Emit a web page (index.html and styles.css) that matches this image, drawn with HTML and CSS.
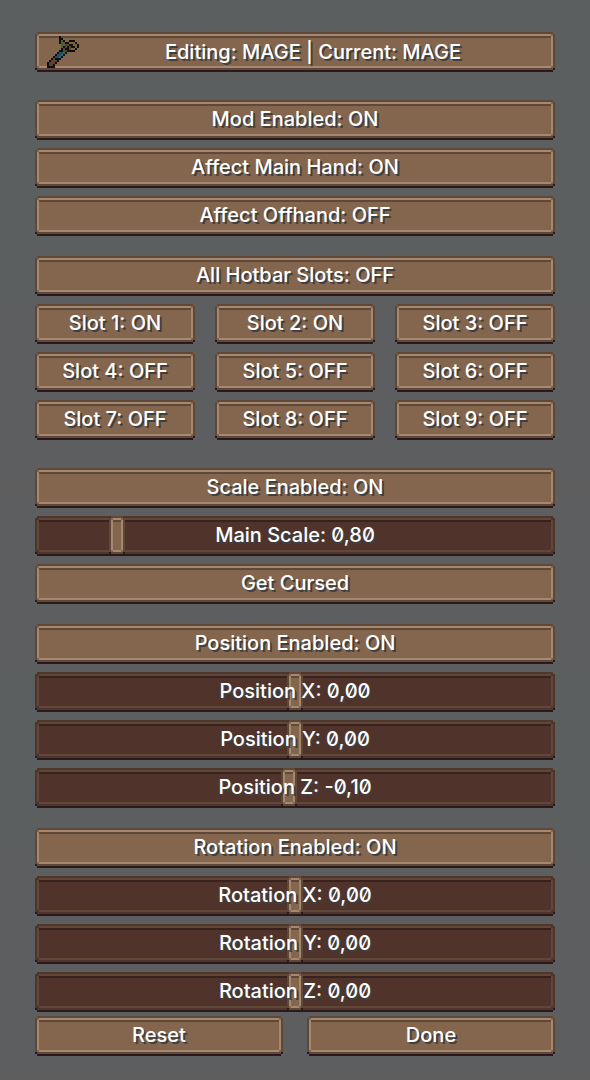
FILE: index.html
```
<!DOCTYPE html>
<html lang="en">
<head>
<meta charset="utf-8">
<meta name="viewport" content="width=device-width, initial-scale=1">
<title>Item settings</title>
<link rel="stylesheet" href="styles.css">
</head>
<body>
<main class="screen">
  <button class="btn btn-header" type="button">
    <svg class="staff" viewBox="0 0 16 16" shape-rendering="crispEdges" aria-hidden="true">
      <path fill="#0d1014" d="M6 0h1v1h1v1h1v1h-2v1h-1zM11 2h3v1h-3zM9 3h2v1h-2zM14 3h1v1h-1zM7 3h0M11 4h2v1h-2zM15 4h1v2h-1zM8 5h1v1h-1zM10 5h1v1h-1zM12 5h2v1h-2zM7 6h1v1h-1zM9 6h2v1h-2zM14 6h1v1h-1zM6 7h2v1h-2zM10 7h4v1h-4zM5 8h1v1h-1zM9 8h1v1h-1zM4 9h1v1h-1zM8 9h1v1h-1zM3 10h1v1h-1zM7 10h1v1h-1zM2 11h1v1h-1zM4 11h3v1h-3zM1 12h1v1h-1zM5 12h1v1h-1zM0 13h1v2h-1zM4 13h1v1h-1zM3 14h1v1h-1zM0 15h4v1h-4z"/>
      <path fill="#4d602f" d="M7 2h1v1h1v2h-1v1h-1z"/>
      <path fill="#80602f" d="M11 3h3v1h1v2h-1v-1h-1v-1h-2zM12 6h2v1h-2z"/>
      <path fill="#5c412b" d="M9 4h2v1h-1v1h-1zM11 5h1v2h-1zM8 6h1v1h1v1h-2zM3 11h1v1h1v1h-1v1h-1v1h-2v-2h1v-1h1z"/>
      <path fill="#235064" d="M6 8h2v1h-1v1h-1v1h-2v-1h1v-1h1z"/>
      <path fill="#286a68" d="M8 8h1v1h-1v1h-1v1h-1v-1h1v-1h1z"/>
    </svg>
    <span>Editing: MAGE | Current: MAGE</span>
  </button>

  <section class="group">
    <button class="btn" type="button">Mod Enabled: ON</button>
    <button class="btn" type="button">Affect Main Hand: ON</button>
    <button class="btn" type="button">Affect Offhand: OFF</button>
  </section>

  <section class="group group-near">
    <button class="btn" type="button">All Hotbar Slots: OFF</button>
    <div class="slots">
      <button class="btn" type="button">Slot 1: ON</button>
      <button class="btn" type="button">Slot 2: ON</button>
      <button class="btn" type="button">Slot 3: OFF</button>
      <button class="btn" type="button">Slot 4: OFF</button>
      <button class="btn" type="button">Slot 5: OFF</button>
      <button class="btn" type="button">Slot 6: OFF</button>
      <button class="btn" type="button">Slot 7: OFF</button>
      <button class="btn" type="button">Slot 8: OFF</button>
      <button class="btn" type="button">Slot 9: OFF</button>
    </div>
  </section>

  <section class="group">
    <button class="btn" type="button">Scale Enabled: ON</button>
    <label class="slider"><input type="range" min="0.1" max="4.85" step="0.05" value="0.8"><span>Main Scale: 0,80</span></label>
    <button class="btn" type="button">Get Cursed</button>
  </section>

  <section class="group group-near">
    <button class="btn" type="button">Position Enabled: ON</button>
    <label class="slider"><input type="range" min="-4" max="4" step="0.05" value="0"><span>Position X: 0,00</span></label>
    <label class="slider"><input type="range" min="-4" max="4" step="0.05" value="0"><span>Position Y: 0,00</span></label>
    <label class="slider"><input type="range" min="-4" max="4" step="0.05" value="-0.1"><span>Position Z: -0,10</span></label>
  </section>

  <section class="group group-near">
    <button class="btn" type="button">Rotation Enabled: ON</button>
    <label class="slider"><input type="range" min="-180" max="180" value="0"><span>Rotation X: 0,00</span></label>
    <label class="slider"><input type="range" min="-180" max="180" value="0"><span>Rotation Y: 0,00</span></label>
    <label class="slider"><input type="range" min="-180" max="180" value="0"><span>Rotation Z: 0,00</span></label>
  </section>

  <footer class="actions">
    <button class="btn" type="button">Reset</button>
    <button class="btn" type="button">Done</button>
  </footer>
</main>
</body>
</html>
```
FILE: styles.css
```
* {
  box-sizing: border-box;
}

body {
  margin: 0;
  background: linear-gradient(#5b5f5f 20%, #5e5e5f 45%, #5b5f5f 70%, #5e5e5f);
  color: #fff;
  font: 500 20px/24px Inter, "Liberation Sans", Arial, sans-serif;
  font-variant-numeric: slashed-zero;
}

.screen {
  padding: 32px 35px 24px;
}

.group {
  display: grid;
  gap: 8px;
  margin-top: 28px;
}

.group-near {
  margin-top: 20px;
}

.slots {
  display: grid;
  grid-template-columns: repeat(3, 1fr);
  gap: 8px 20px;
}

.actions {
  display: grid;
  grid-template-columns: repeat(2, 1fr);
  gap: 24px;
  margin-top: 4px;
}

/* Bevelled frame built from 2px strips, outermost corners left open. */
.btn,
.slider input,
.slider input::-webkit-slider-thumb {
  --edge: #5f4838;
  --light: #a58870;
  --corner: #846650;
  --inner: #5f4838;
  --fill: #84664e;
  --base: #2b191b;
  height: 40px;
  margin: 0;
  border: 0;
  border-radius: 0;
  background:
    linear-gradient(var(--edge), var(--edge)) center top / calc(100% - 4px) 2px,
    linear-gradient(var(--base), var(--base)) center bottom / calc(100% - 4px) 2px,
    linear-gradient(var(--edge) 34px, var(--base) 34px) left 2px / 2px 36px,
    linear-gradient(var(--edge) 34px, var(--base) 34px) right 2px / 2px 36px,
    linear-gradient(var(--corner) 2px, var(--light) 2px 32px, var(--corner) 32px) 2px 2px / 2px 34px,
    linear-gradient(var(--corner) 2px, var(--light) 2px 32px, var(--corner) 32px) right 2px top 2px / 2px 34px,
    linear-gradient(var(--light) 2px, var(--inner) 2px 4px, var(--fill) 4px 32px, var(--light) 32px 34px, var(--edge) 34px) center 2px / calc(100% - 4px) 36px;
  background-repeat: no-repeat;
}

.btn {
  display: flex;
  align-items: center;
  justify-content: center;
  padding: 0 8px 2px;
  color: inherit;
  font: inherit;
  font-variant-numeric: inherit;
  text-shadow: 2px 2px #3f3f3f;
}

.btn-header {
  width: 100%;
  display: grid;
  grid-template-columns: 32px 1fr;
  padding: 0 8px 0 12px;
}

.staff {
  width: 32px;
  height: 32px;
}

.slider {
  display: grid;
  align-items: center;
  text-align: center;
}

.slider > * {
  grid-area: 1 / 1;
}

.slider input {
  --edge: #50352d;
  --light: #5f4838;
  --corner: #50352d;
  --inner: #37221e;
  --fill: #50342c;
  width: 100%;
  appearance: none;
}

.slider input::-webkit-slider-thumb {
  width: 16px;
  appearance: none;
}

.slider span {
  position: relative;
  padding-bottom: 2px;
  pointer-events: none;
  text-shadow: 2px 2px #3f3f3f;
}
```
